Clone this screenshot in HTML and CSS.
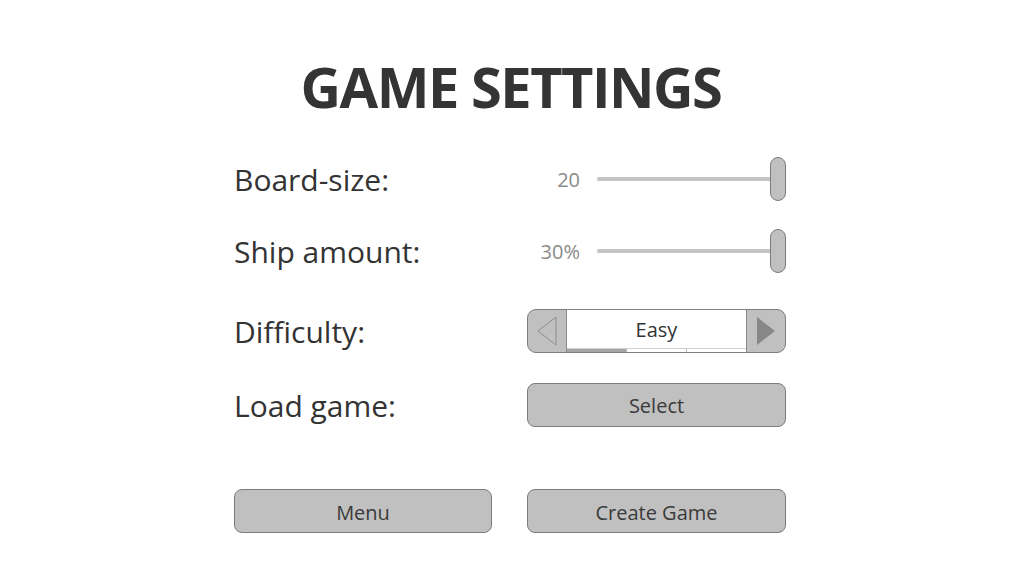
FILE: index.html
```html
<!DOCTYPE html>
<html>
<head>
<meta charset="utf-8">
<link rel="stylesheet" href="styles.css">
</head>
<body>
<main class="page">
  <h1 class="title">GAME SETTINGS</h1>
  <div class="settings">
    <div class="row row-board">
      <div class="label">Board-size:</div>
      <div class="control slider">
        <span class="value">20</span>
        <div class="track"><div class="thumb"></div></div>
      </div>
    </div>
    <div class="row row-ship">
      <div class="label">Ship amount:</div>
      <div class="control slider">
        <span class="value">30%</span>
        <div class="track"><div class="thumb"></div></div>
      </div>
    </div>
    <div class="row row-diff">
      <div class="label">Difficulty:</div>
      <div class="control stepper">
        <div class="arrow arrow-left">
          <svg width="20" height="30" viewBox="0 0 20 30"><polygon points="19,1 19,29 1,15" fill="none" stroke="#8c8c8c" stroke-width="1"/></svg>
        </div>
        <div class="step-center">
          <div class="step-text">Easy</div>
          <div class="step-bar">
            <span class="seg seg-on"></span><span class="seg"></span><span class="seg"></span>
          </div>
        </div>
        <div class="arrow arrow-right">
          <svg width="20" height="30" viewBox="0 0 20 30"><polygon points="1,1 1,29 19,15" fill="#878787"/></svg>
        </div>
      </div>
    </div>
    <div class="row row-load">
      <div class="label">Load game:</div>
      <button class="control btn">Select</button>
    </div>
    <div class="row row-actions">
      <button class="btn">Menu</button>
      <button class="btn">Create Game</button>
    </div>
  </div>
</main>
</body>
</html>
```
FILE: styles.css
```css
html, body {
  margin: 0;
  padding: 0;
  background: #ffffff;
}
body {
  font-family: "Open Sans", "Noto Sans", sans-serif;
  color: #333333;
}
.page {
  width: 1022px;
  display: flex;
  flex-direction: column;
  align-items: center;
}
.title {
  margin: 58px 0 0 0;
  font-size: 56px;
  line-height: 56px;
  font-weight: 700;
  color: #343434;
  letter-spacing: -1.5px;
}
.settings {
  margin-top: 41px;
  width: 553px;
  margin-left: -1px;
  display: flex;
  flex-direction: column;
}
.row {
  display: grid;
  grid-template-columns: 258px 259px;
  column-gap: 35px;
  height: 44px;
  align-items: center;
}
.row-ship { margin-top: 28px; }
.row-diff { margin-top: 36px; }
.row-load { margin-top: 30px; }
.row-actions { margin-top: 64px; }
.label {
  font-size: 30px;
  line-height: 44px;
  padding-top: 3px;
  color: #333333;
  white-space: nowrap;
}
.slider {
  display: flex;
  align-items: center;
  height: 44px;
}
.value {
  width: 53px;
  text-align: right;
  font-size: 20px;
  color: #8a8a8a;
  padding-top: 2px;
}
.track {
  margin-left: 17px;
  flex: 1;
  height: 4px;
  border-radius: 2px;
  background: #c4c4c4;
  display: flex;
  justify-content: flex-end;
  align-items: center;
}
.thumb {
  width: 14px;
  height: 42px;
  border: 1px solid #7b7b7b;
  border-radius: 8px;
  background: #c0c0c0;
  flex: none;
}
.stepper {
  display: flex;
  height: 44px;
  box-sizing: border-box;
  border: 1px solid #7d7d7d;
  border-radius: 9px;
  background: #c0c0c0;
  overflow: hidden;
}
.arrow {
  width: 38px;
  display: flex;
  align-items: center;
  justify-content: center;
  flex: none;
}
.step-center {
  flex: 1;
  background: #ffffff;
  border-left: 1px solid #8a8a8a;
  border-right: 1px solid #8a8a8a;
  display: flex;
  flex-direction: column;
}
.step-text {
  flex: 1;
  display: flex;
  align-items: center;
  justify-content: center;
  font-size: 20px;
  padding-top: 1px;
  color: #333333;
}
.step-bar {
  display: flex;
  height: 3px;
  border-top: 1px solid #d0d0d0;
}
.seg {
  flex: 1;
  background: #ffffff;
  border-left: 1px solid #b8b8b8;
}
.seg:first-child { border-left: none; }
.seg-on { background: #a6a6a6; }
.btn {
  height: 44px;
  box-sizing: border-box;
  border: 1px solid #7b7b7b;
  border-radius: 8px;
  background: #c0c0c0;
  font-family: "Open Sans", "Noto Sans", sans-serif;
  font-size: 20px;
  color: #3a3a3a;
  padding: 2px 0 0 0;
}
```
